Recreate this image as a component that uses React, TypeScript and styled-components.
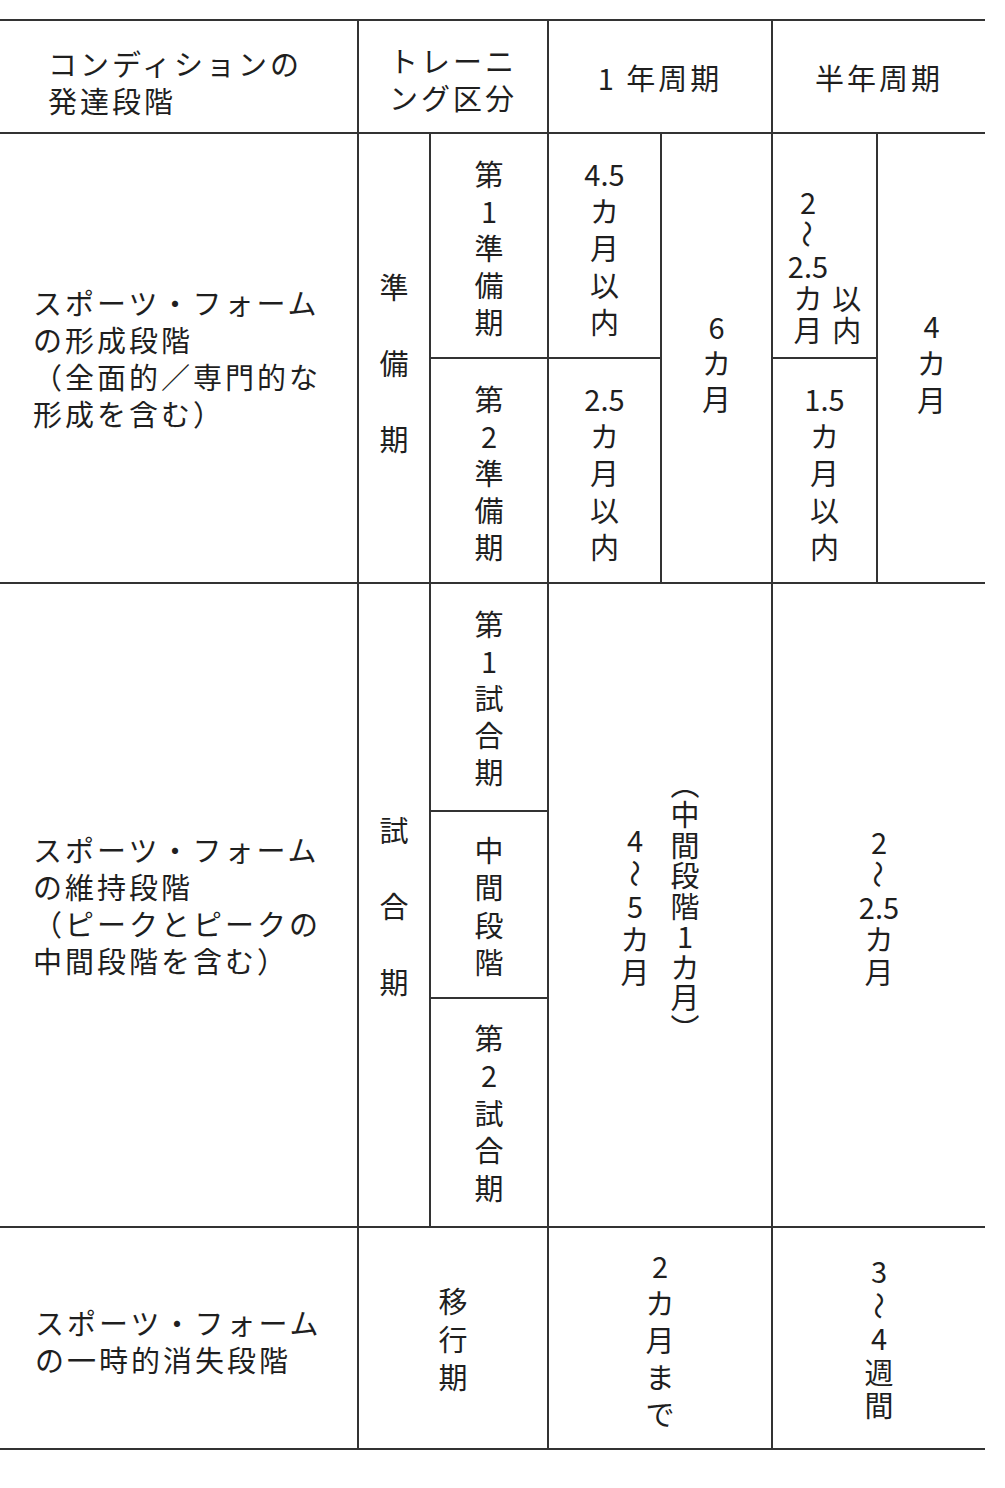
import React from "react";
import styled, { createGlobalStyle } from "styled-components";

const Global = createGlobalStyle`
  html, body { margin: 0; padding: 0; background: #ffffff; }
  body {
    font-family: "Noto Sans CJK JP", "Noto Sans", sans-serif;
    color: #1f1f1f;
  }
`;

const Page = styled.div`
  width: 1005px;
  height: 1488px;
  padding-top: 19px;
  box-sizing: border-box;
  background: #ffffff;
`;

const Table = styled.div`
  display: grid;
  width: 985px;
  grid-template-columns: 357px 70px 116px 111px 109px 103px 107px;
  grid-template-rows: 111px 223px 223px 226px 185px 227px 220px;
  gap: 2px;
  padding: 2px 0;
  background: #333333;
`;

type CellProps = { $col: string; $row: string; $left?: number; $shift?: number };

const Cell = styled.div<CellProps>`
  grid-column: ${(p) => p.$col};
  grid-row: ${(p) => p.$row};
  background: #ffffff;
  display: flex;
  align-items: center;
  justify-content: ${(p) => (p.$left !== undefined ? "flex-start" : "center")};
  padding-left: ${(p) => p.$left ?? 0}px;
  padding-top: ${(p) => p.$shift ?? 0}px;
  box-sizing: border-box;
  min-width: 0;
  overflow: hidden;
`;

const Prose = styled.div<{ $center?: boolean }>`
  font-size: 29px;
  line-height: 37px;
  letter-spacing: 3px;
  text-align: ${(p) => (p.$center ? "center" : "left")};
  white-space: nowrap;
`;

const ProseLine = styled.div`
  display: block;
`;

const Stack = styled.div<{ $step: number }>`
  display: flex;
  flex-direction: column;
  align-items: center;
  font-size: 29px;
  letter-spacing: 0;
  & > span {
    display: block;
    height: ${(p) => p.$step}px;
    line-height: ${(p) => p.$step}px;
    text-align: center;
    white-space: nowrap;
  }
`;

const Wave = styled.i`
  display: inline-block;
  font-style: normal;
  font-size: 28px;
  transform: rotate(90deg);
`;

const Pair = styled.div<{ $gap: number; $align: "center" | "flex-end" }>`
  display: flex;
  flex-direction: row;
  align-items: ${(p) => p.$align};
  gap: ${(p) => p.$gap}px;
`;

const W = () => <Wave>～</Wave>;

const VText: React.FC<{ items: React.ReactNode[]; step: number }> = ({ items, step }) => (
  <Stack $step={step}>
    {items.map((it, i) => (
      <span key={i}>{it}</span>
    ))}
  </Stack>
);

const HText: React.FC<{ lines: string[]; center?: boolean }> = ({ lines, center }) => (
  <Prose $center={center}>
    {lines.map((l, i) => (
      <ProseLine key={i}>{l}</ProseLine>
    ))}
  </Prose>
);

export default function App() {
  return (
    <Page>
      <Global />
      <Table>
        {/* header */}
        <Cell $col="1" $row="1" $left={48} $shift={10}>
          <HText lines={["コンディションの", "発達段階"]} />
        </Cell>
        <Cell $col="2 / span 2" $row="1" $shift={4}>
          <HText center lines={["トレーニ", "ング区分"]} />
        </Cell>
        <Cell $col="4 / span 2" $row="1" $shift={2}>
          <HText center lines={["1 年周期"]} />
        </Cell>
        <Cell $col="6 / span 2" $row="1" $shift={2}>
          <HText center lines={["半年周期"]} />
        </Cell>

        {/* row 1: formation */}
        <Cell $col="1" $row="2 / span 2" $left={33}>
          <HText lines={["スポーツ・フォーム", "の形成段階", "（全面的／専門的な", "形成を含む）"]} />
        </Cell>
        <Cell $col="2" $row="2 / span 2" $shift={8}>
          <VText step={76} items={["準", "備", "期"]} />
        </Cell>
        <Cell $col="3" $row="2" $shift={4}>
          <VText step={37} items={["第", "1", "準", "備", "期"]} />
        </Cell>
        <Cell $col="4" $row="2" $shift={4}>
          <VText step={37} items={["4.5", "カ", "月", "以", "内"]} />
        </Cell>
        <Cell $col="5" $row="2 / span 2" $shift={8}>
          <VText step={36} items={["6", "カ", "月"]} />
        </Cell>
        <Cell $col="6" $row="2" $shift={38}>
          <Pair $gap={4} $align="flex-end">
            <VText step={32} items={["2", <W key="w" />, "2.5", "カ", "月"]} />
            <VText step={32} items={["以", "内"]} />
          </Pair>
        </Cell>
        <Cell $col="7" $row="2 / span 2" $shift={8}>
          <VText step={37} items={["4", "カ", "月"]} />
        </Cell>
        <Cell $col="3" $row="3" $shift={4}>
          <VText step={37} items={["第", "2", "準", "備", "期"]} />
        </Cell>
        <Cell $col="4" $row="3" $shift={4}>
          <VText step={37} items={["2.5", "カ", "月", "以", "内"]} />
        </Cell>
        <Cell $col="6" $row="3" $shift={4}>
          <VText step={37} items={["1.5", "カ", "月", "以", "内"]} />
        </Cell>

        {/* row 2: maintenance */}
        <Cell $col="1" $row="4 / span 3" $left={33}>
          <HText lines={["スポーツ・フォーム", "の維持段階", "（ピークとピークの", "中間段階を含む）"]} />
        </Cell>
        <Cell $col="2" $row="4 / span 3">
          <VText step={76} items={["試", "合", "期"]} />
        </Cell>
        <Cell $col="3" $row="4">
          <VText step={37} items={["第", "1", "試", "合", "期"]} />
        </Cell>
        <Cell $col="3" $row="5" $shift={2}>
          <VText step={37.5} items={["中", "間", "段", "階"]} />
        </Cell>
        <Cell $col="3" $row="6">
          <VText step={37.5} items={["第", "2", "試", "合", "期"]} />
        </Cell>
        <Cell $col="4 / span 2" $row="4 / span 3" $shift={0}>
          <Pair $gap={21} $align="center">
            <VText step={33} items={["4", <W key="w" />, "5", "カ", "月"]} />
            <VText step={30.5} items={["︵", "中", "間", "段", "階", "1", "カ", "月", "︶"]} />
          </Pair>
        </Cell>
        <Cell $col="6 / span 2" $row="4 / span 3" $shift={2}>
          <VText step={32.5} items={["2", <W key="w" />, "2.5", "カ", "月"]} />
        </Cell>

        {/* row 3: temporary loss */}
        <Cell $col="1" $row="7" $left={35} $shift={6}>
          <HText lines={["スポーツ・フォーム", "の一時的消失段階"]} />
        </Cell>
        <Cell $col="2 / span 2" $row="7">
          <VText step={38} items={["移", "行", "期"]} />
        </Cell>
        <Cell $col="4 / span 2" $row="7" $shift={2}>
          <VText step={37} items={["2", "カ", "月", "ま", "で"]} />
        </Cell>
        <Cell $col="6 / span 2" $row="7">
          <VText step={33.5} items={["3", <W key="w" />, "4", "週", "間"]} />
        </Cell>
      </Table>
    </Page>
  );
}
